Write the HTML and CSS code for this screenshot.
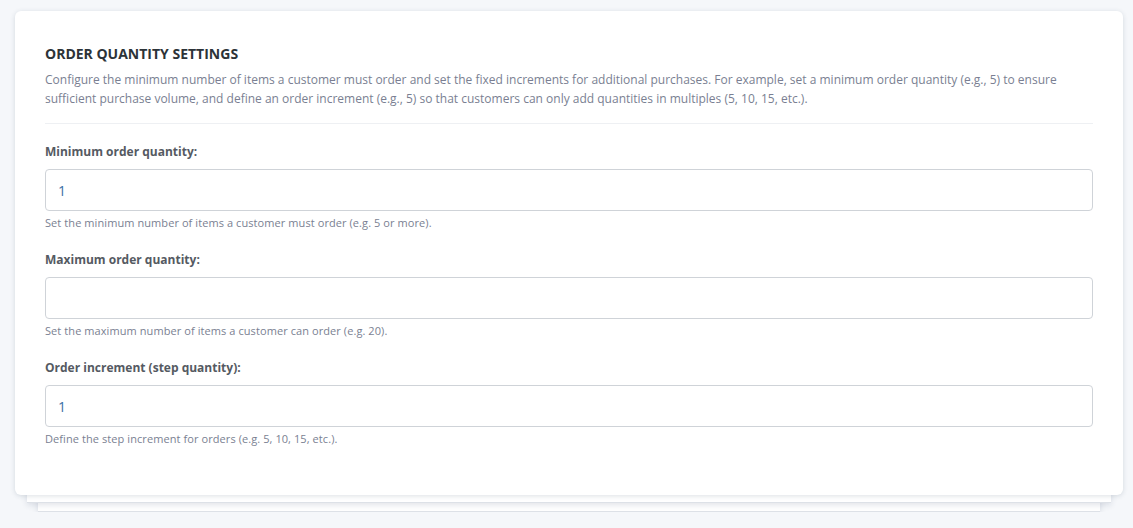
FILE: index.html
```html
<!DOCTYPE html>
<html lang="en">
<head>
    <meta charset="UTF-8">
    <meta name="viewport" content="width=device-width, initial-scale=1.0">
    <title>Order Quantity Settings</title>
    <link rel="stylesheet" href="styles.css">
</head>
<body>
    <div class="stack">
        <div class="sheet sheet-back"></div>
        <div class="sheet sheet-mid"></div>
        <div class="card">
            <h2 class="card-title">Order Quantity Settings</h2>
            <p class="card-desc">Configure the minimum number of items a customer must order and set the fixed increments for additional purchases. For example, set a minimum order quantity (e.g., 5) to ensure sufficient purchase volume, and define an order increment (e.g., 5) so that customers can only add quantities in multiples (5, 10, 15, etc.).</p>
            <hr class="divider">

            <div class="field">
                <label class="field-label" for="min-qty">Minimum order quantity:</label>
                <input class="field-input" id="min-qty" type="text" value="1">
                <p class="field-help">Set the minimum number of items a customer must order (e.g. 5 or more).</p>
            </div>

            <div class="field">
                <label class="field-label" for="max-qty">Maximum order quantity:</label>
                <input class="field-input" id="max-qty" type="text" value="">
                <p class="field-help">Set the maximum number of items a customer can order (e.g. 20).</p>
            </div>

            <div class="field">
                <label class="field-label" for="step-qty">Order increment (step quantity):</label>
                <input class="field-input" id="step-qty" type="text" value="1">
                <p class="field-help">Define the step increment for orders (e.g. 5, 10, 15, etc.).</p>
            </div>
        </div>
    </div>
</body>
</html>
```

FILE: styles.css
```css
body {
    font-family: "Open Sans", Arial, sans-serif;
    background-color: #f5f7fa;
    margin: 0;
    padding: 11px 10px 0 15px;
    color: #333;
}
.stack {
    position: relative;
    width: 1108px;
    padding-bottom: 17px;
}
/* stacked sheets peeking out under the card */
.sheet {
    position: absolute;
    height: 30px;
    background-color: #fff;
    border-bottom: 1px solid #dde1e7;
    box-shadow: 0 2px 6px rgba(40, 60, 90, 0.14);
}
.sheet-mid {
    left: 12px;
    right: 12px;
    bottom: 9px;
}
.sheet-back {
    left: 23px;
    right: 23px;
    bottom: 0;
}
.card {
    position: relative;
    background-color: #fff;
    border-radius: 6px;
    box-shadow: 0 1px 5px rgba(40, 60, 90, 0.16);
    padding: 32px 30px 49px 30px;
}
.card-title {
    margin: 0 0 6px;
    font-size: 14px;
    line-height: 21px;
    font-weight: 700;
    text-transform: uppercase;
    color: #2c3338;
}
.card-desc {
    margin: 0;
    font-size: 12px;
    line-height: 19px;
    color: #7a7f92;
}
.divider {
    border: 0;
    border-top: 1px solid #eef0f3;
    margin: 15px 0 19px;
}
.field {
    margin-bottom: 21px;
}
.field:last-child {
    margin-bottom: 0;
}
.field-label {
    display: block;
    font-size: 12px;
    line-height: 18px;
    font-weight: 700;
    color: #555a62;
    margin-bottom: 8px;
}
.field-input {
    display: block;
    box-sizing: border-box;
    width: 100%;
    height: 42px;
    border: 1px solid #cfd3d8;
    border-radius: 4px;
    padding: 0 12px;
    font-family: "Open Sans", Arial, sans-serif;
    font-size: 14px;
    color: #3a6ea5;
    background-color: #fff;
}
.field-help {
    margin: 4px 0 0;
    font-size: 11px;
    line-height: 15px;
    letter-spacing: 0.08px;
    color: #7a7f92;
}
```
